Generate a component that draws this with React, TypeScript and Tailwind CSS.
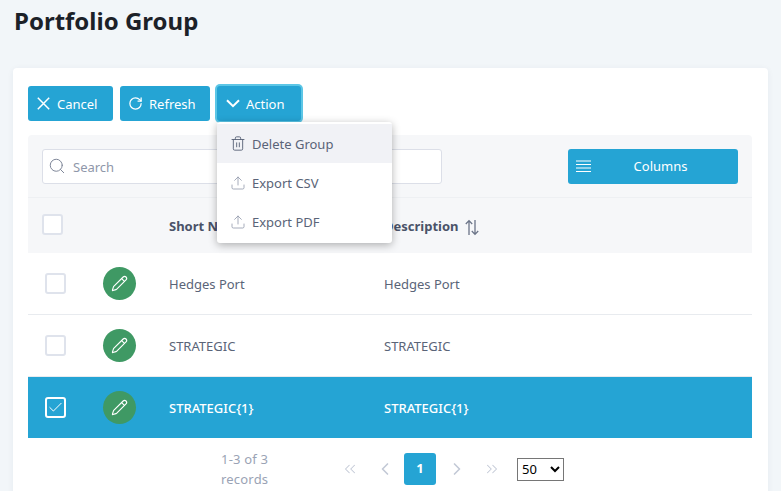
import { Check, ChevronLeft, ChevronRight, ChevronsLeft, ChevronsRight, Pencil, RotateCw, Search, Trash2, Upload } from 'lucide-react'
import type { ReactNode } from 'react'

const rows = [
  { name: 'Hedges Port', checked: false },
  { name: 'STRATEGIC', checked: false },
  { name: 'STRATEGIC{1}', checked: true },
]

function ToolButton({ icon, label, width, focused }: { icon: ReactNode; label: string; width: string; focused?: boolean }) {
  return (
    <button
      className={`flex h-[35px] items-center gap-[6px] rounded-[3px] bg-[#25a4d4] pl-[8px] text-[13px] text-white ${width} ${focused ? 'shadow-[0_0_0_2px_#5cc6e6]' : ''}`}
    >
      <span className="flex w-[15px] justify-center">{icon}</span>
      <span className="pt-[2px]">{label}</span>
    </button>
  )
}

function MenuItem({ icon, label, active }: { icon: ReactNode; label: string; active?: boolean }) {
  return (
    <div className={`flex h-[39px] items-center gap-[6px] pl-[13px] text-[13px] text-[#5a6478] ${active ? 'bg-[#f1f2f6]' : ''}`}>
      <span className="flex w-[16px] justify-center">{icon}</span>
      <span className="pt-[3px]">{label}</span>
    </div>
  )
}

function Box({ checked }: { checked: boolean }) {
  return (
    <div className={`flex h-[21px] w-[21px] items-center justify-center rounded-[3px] border-2 ${checked ? 'border-white' : 'border-[#dfe3ec] bg-white'}`}>
      {checked && <Check size={17} strokeWidth={1.4} className="text-white" />}
    </div>
  )
}

function SortIcon() {
  return (
    <svg width="16" height="17" viewBox="0 0 16 17" fill="none" stroke="#6b7488" strokeWidth="1.3">
      <path d="M5 16V2M1.8 5L5 1.6L8.2 5" />
      <path d="M11 1v14M7.8 12L11 15.4L14.2 12" />
    </svg>
  )
}

function BarsIcon() {
  return (
    <svg width="15" height="13" viewBox="0 0 15 13" stroke="#ffffff" strokeWidth="1.2">
      <path d="M0 1h15M0 4.5h15M0 8h15M0 11.5h15" />
    </svg>
  )
}

function CrossIcon() {
  return (
    <svg width="13" height="13" viewBox="0 0 13 13" fill="none" stroke="#ffffff" strokeWidth="1.5">
      <path d="M0.8 0.8L12.2 12.2M12.2 0.8L0.8 12.2" />
    </svg>
  )
}

function CaretIcon() {
  return (
    <svg width="14" height="9" viewBox="0 0 14 9" fill="none" stroke="#ffffff" strokeWidth="2">
      <path d="M1 1.2L7 7.2L13 1.2" />
    </svg>
  )
}

export default function App() {
  return (
    <div className="h-[491px] w-[781px] overflow-hidden bg-[#f2f6f9] font-['Noto_Sans',sans-serif]">
      <h1 className="pl-[14px] pt-[4px] text-[24px] leading-[34px] font-bold text-[#1c2128]">Portfolio Group</h1>

      <div className="relative ml-[13px] mt-[30px] h-[440px] w-[755px] rounded-[4px] bg-white pl-[15px] pr-[16px] pt-[18px] shadow-[0_1px_6px_rgba(30,50,80,0.06)]">
        <div className="flex gap-[7px]">
          <ToolButton icon={<CrossIcon />} label="Cancel" width="w-[85px]" />
          <ToolButton icon={<RotateCw size={15} strokeWidth={2} />} label="Refresh" width="w-[90px]" />
          <ToolButton icon={<CaretIcon />} label="Action" width="w-[84px]" focused />
        </div>

        {/* dropdown sits over the table */}
        <div className="absolute left-[204px] top-[54px] z-10 w-[175px] rounded-[3px] bg-white py-[2px] shadow-[0_2px_8px_rgba(0,0,0,0.3)]">
          <MenuItem active icon={<Trash2 size={17} strokeWidth={1.4} />} label="Delete Group" />
          <MenuItem icon={<Upload size={18} strokeWidth={1.2} className="text-[#8f97aa]" />} label="Export CSV" />
          <MenuItem icon={<Upload size={18} strokeWidth={1.2} className="text-[#8f97aa]" />} label="Export PDF" />
        </div>

        <div className="mt-[14px] rounded-t-[4px] bg-[#f6f7f9]">
          <div className="flex h-[63px] items-center justify-between border-b border-[#eef0f3] px-[14px]">
            <div className="flex h-[35px] w-[400px] items-center gap-[7px] rounded-[3px] border border-[#dcdfe8] bg-white pl-[5px] text-[13px] text-[#8f97aa]">
              <Search size={18} strokeWidth={1.3} className="text-[#7b8496]" />
              <span className="pt-[3px]">Search</span>
            </div>
            <button className="flex h-[35px] w-[170px] items-center rounded-[3px] bg-[#25a4d4] pl-[8px] text-[13px] text-white">
              <BarsIcon />
              <span className="flex-1 pr-[8px] pt-[2px] text-center">Columns</span>
            </button>
          </div>
          <div className="flex h-[55px] items-center text-[13px] font-bold text-[#4a5268]">
            <div className="w-[141px] pb-[3px] pl-[14px]">
              <Box checked={false} />
            </div>
            <div className="w-[215px] pt-[3px]">Short Name</div>
            <div className="flex items-center gap-[5px] pt-[3px]">
              Description
              <SortIcon />
            </div>
          </div>
        </div>

        {rows.map((row) => (
          <div
            key={row.name}
            className={`flex items-center text-[13px] ${row.checked ? 'h-[61px] bg-[#25a4d4] font-medium text-white' : 'h-[62px] border-b border-[#e8ebef] text-[#5a6478]'}`}
          >
            <div className="w-[75px] pl-[17px]">
              <Box checked={row.checked} />
            </div>
            <div className="w-[66px]">
              <div className="flex h-[33px] w-[33px] items-center justify-center rounded-full bg-[#3f9964] text-white">
                <Pencil size={17} strokeWidth={1.6} />
              </div>
            </div>
            <div className="w-[215px] pt-[2px]">{row.name}</div>
            <div className="pt-[2px]">{row.name}</div>
          </div>
        ))}

        <div className="mt-[15px] flex h-[32px] items-center text-[13px] text-[#9aa3b5]">
          <span className="ml-[193px] w-[98px] pt-[1px] tracking-[0.2px]">1-3 of 3 records</span>
          <ChevronsLeft size={18} strokeWidth={1.4} className="ml-[22px] text-[#c3c9d6]" />
          <ChevronLeft size={20} strokeWidth={2} className="ml-[16px] text-[#c3c9d6]" />
          <div className="ml-[9px] flex h-[32px] w-[32px] items-center justify-center rounded-[3px] bg-[#25a4d4] font-bold text-white">1</div>
          <ChevronRight size={20} strokeWidth={2} className="ml-[11px] text-[#c3c9d6]" />
          <ChevronsRight size={18} strokeWidth={1.4} className="ml-[16px] text-[#c3c9d6]" />
          <select defaultValue="50" className="ml-[16px] h-[23px] w-[47px] border border-[#767676] bg-white text-[13px] text-black">
            <option>50</option>
          </select>
        </div>
      </div>
    </div>
  )
}
